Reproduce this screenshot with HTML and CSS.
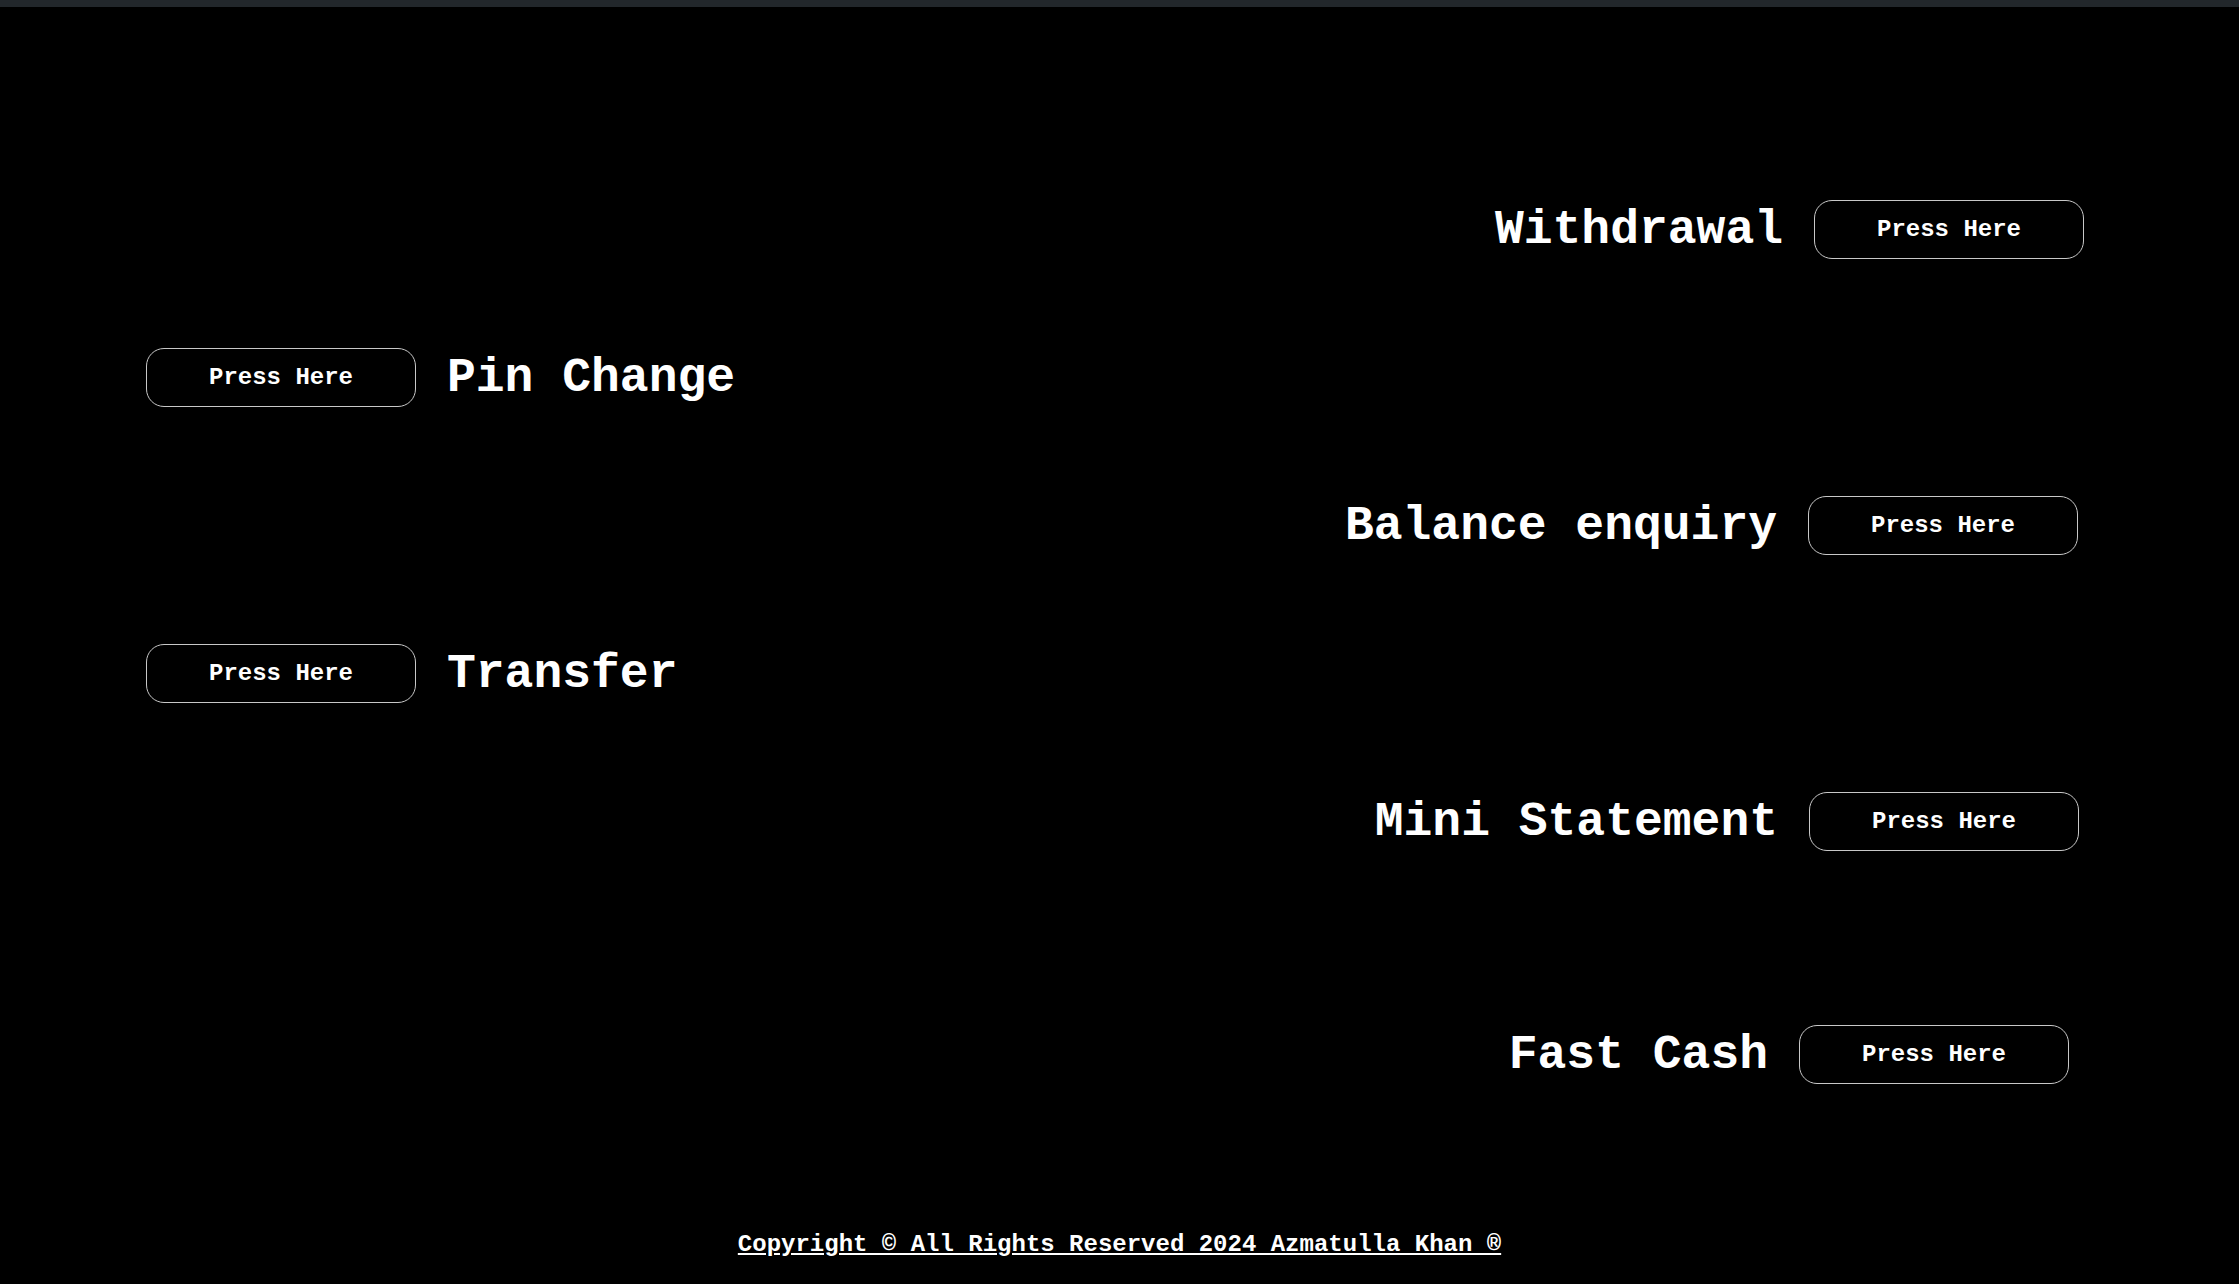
FILE: index.html
```html
<!DOCTYPE html>
<html lang="en">
<head>
<meta charset="utf-8">
<title>ATM</title>
<link rel="stylesheet" href="styles.css">
</head>
<body>
<div class="topbar"></div>
<main class="menu">
  <div class="row row-right row-withdrawal">
    <h2 class="label">Withdrawal</h2>
    <button class="btn">Press Here</button>
  </div>
  <div class="row row-left">
    <button class="btn">Press Here</button>
    <h2 class="label">Pin Change</h2>
  </div>
  <div class="row row-right row-balance">
    <h2 class="label">Balance enquiry</h2>
    <button class="btn">Press Here</button>
  </div>
  <div class="row row-left">
    <button class="btn">Press Here</button>
    <h2 class="label">Transfer</h2>
  </div>
  <div class="row row-right row-mini">
    <h2 class="label">Mini Statement</h2>
    <button class="btn">Press Here</button>
  </div>
  <div class="row row-right row-fast">
    <h2 class="label">Fast Cash</h2>
    <button class="btn">Press Here</button>
  </div>
</main>
<footer class="footer">
  <span class="copy">Copyright © All Rights Reserved 2024 Azmatulla Khan ®</span>
</footer>
</body>
</html>
```
FILE: styles.css
```css
html, body {
  margin: 0;
  padding: 0;
  background: #000;
  color: #fff;
  font-family: "Liberation Mono", "Courier New", monospace;
  font-weight: bold;
}
.topbar {
  height: 7px;
  background: #22272b;
}
.menu {
  display: flex;
  flex-direction: column;
  gap: 89px;
  padding: 193px 155px 0 146px;
}
.row {
  display: flex;
  align-items: center;
  height: 59px;
  gap: 31px;
}
.row-right {
  justify-content: flex-end;
}
.row-left {
  justify-content: flex-start;
}
.row-balance { margin-right: 6px; }
.row-mini { margin-right: 5px; }
.row-fast { margin-right: 15px; margin-top: 85px; }
.label {
  margin: 0;
  font-size: 48px;
  font-weight: bold;
  line-height: 1;
  white-space: nowrap;
}
.btn {
  width: 270px;
  height: 59px;
  box-sizing: border-box;
  background: #000;
  color: #fff;
  border: 1px solid #c8c8c8;
  border-radius: 18px;
  font-family: "Liberation Mono", "Courier New", monospace;
  font-weight: bold;
  font-size: 24px;
  padding: 0;
  cursor: pointer;
}
.footer {
  text-align: center;
  padding-top: 147px;
}
.copy {
  font-size: 24px;
  text-decoration: underline;
}
```
